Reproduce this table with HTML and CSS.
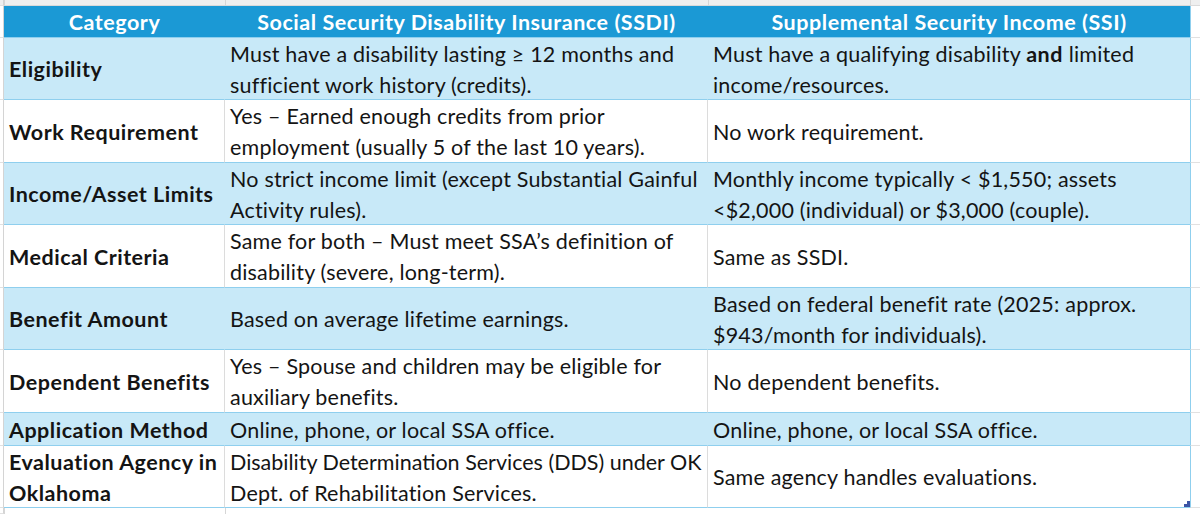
FILE: index.html
```html
<!DOCTYPE html>
<html lang="en">
<head>
<meta charset="utf-8">
<title>SSDI vs SSI</title>
<link rel="stylesheet" href="styles.css">
</head>
<body>
<div class="sheet">
  <div class="g top"></div><div class="top tl"></div><div class="top tl"></div><div class="top tl"></div><div class="top tl"></div>

  <div class="g"></div>
  <div class="hd">Category</div>
  <div class="hd">Social Security Disability Insurance (SSDI)</div>
  <div class="hd">Supplemental Security Income (SSI)</div>
  <div class="g r"></div>

  <div class="g"></div>
  <div class="c k fill"><span>Eligibility</span></div>
  <div class="c fill"><span>Must have a disability lasting ≥ 12 months and<br>sufficient work history (credits).</span></div>
  <div class="c fill last"><span>Must have a qualifying disability <b>and</b> limited<br>income/resources.</span></div>
  <div class="g r"></div>

  <div class="g"></div>
  <div class="c k"><span>Work Requirement</span></div>
  <div class="c"><span>Yes – Earned enough credits from prior<br>employment (usually 5 of the last 10 years).</span></div>
  <div class="c last"><span>No work requirement.</span></div>
  <div class="g r"></div>

  <div class="g"></div>
  <div class="c k fill"><span>Income/Asset Limits</span></div>
  <div class="c fill"><span>No strict income limit (except Substantial Gainful<br>Activity rules).</span></div>
  <div class="c fill last"><span>Monthly income typically &lt; $1,550; assets<br>&lt;$2,000 (individual) or $3,000 (couple).</span></div>
  <div class="g r"></div>

  <div class="g"></div>
  <div class="c k"><span>Medical Criteria</span></div>
  <div class="c"><span>Same for both – Must meet SSA’s definition of<br>disability (severe, long-term).</span></div>
  <div class="c last"><span>Same as SSDI.</span></div>
  <div class="g r"></div>

  <div class="g"></div>
  <div class="c k fill"><span>Benefit Amount</span></div>
  <div class="c fill"><span>Based on average lifetime earnings.</span></div>
  <div class="c fill last"><span>Based on federal benefit rate (2025: approx.<br>$943/month for individuals).</span></div>
  <div class="g r"></div>

  <div class="g"></div>
  <div class="c k"><span>Dependent Benefits</span></div>
  <div class="c"><span>Yes – Spouse and children may be eligible for<br>auxiliary benefits.</span></div>
  <div class="c last"><span>No dependent benefits.</span></div>
  <div class="g r"></div>

  <div class="g"></div>
  <div class="c k fill"><span>Application Method</span></div>
  <div class="c fill"><span>Online, phone, or local SSA office.</span></div>
  <div class="c fill last"><span>Online, phone, or local SSA office.</span></div>
  <div class="g r"></div>

  <div class="g"></div>
  <div class="c k"><span>Evaluation Agency in<br>Oklahoma</span></div>
  <div class="c"><span><span class="tight">Disability Determination Services (DDS) under OK</span><br>Dept. of Rehabilitation Services.</span></div>
  <div class="c last end"><span>Same agency handles evaluations.</span><span class="handle"></span></div>
  <div class="g r"></div>

  <div class="g bot"></div><div class="bot tl"></div><div class="bot tl"></div><div class="bot"></div><div class="bot"></div>
</div>
</body>
</html>
```

FILE: styles.css
```css
html, body {
  margin: 0;
  padding: 0;
  background: #ffffff;
}
body {
  width: 1200px;
  height: 514px;
  overflow: hidden;
  font-family: Lato, "Liberation Sans", sans-serif;
  color: #141414;
}
.sheet {
  display: grid;
  grid-template-columns: 4px 221px 483px 482px 1fr;
  grid-template-rows: 6px 32px 62px 63px 62px 63px 62px 63px 33px 62px 1fr;
  height: 514px;
}
.sheet > div {
  box-sizing: border-box;
  min-width: 0;
}
.top {
  background: #efefef;
  border-bottom: 1px solid #dadada;
}
.tl {
  border-left: 1px solid #d6d6d6;
}
.g {
  border-right: 1px solid #d4d4d4;
  border-bottom: 1px solid #e1e1e1;
}
.g.top {
  background: #efefef;
}
.g.r {
  border-right: none;
  border-left: 1px solid #8fcfee;
}
.bot {
  background: #ffffff;
}
.hd {
  background: #1b99d5;
  color: #ffffff;
  font-weight: 700;
  font-size: 21.5px;
  letter-spacing: 0.55px;
  line-height: 31px;
  padding-top: 1px;
  text-align: center;
  white-space: nowrap;
  border-bottom: 1px solid #8fcfee;
}
.c {
  display: flex;
  align-items: center;
  padding: 2px 5px 0;
  font-size: 21.5px;
  letter-spacing: 0.2px;
  line-height: 31px;
  white-space: nowrap;
  background: #ffffff;
  border-bottom: 1px solid #8fcfee;
  border-right: 1px solid #dcdcdc;
}
.c.fill {
  background: #c8e9f8;
  border-right-color: #c8e9f8;
}
.c.last {
  border-right: none;
}
.c.k {
  font-weight: 700;
  letter-spacing: 0.5px;
}
.c b {
  font-weight: 700;
  letter-spacing: 0.5px;
}
.tight {
  letter-spacing: 0;
}
.end {
  position: relative;
}
.handle {
  position: absolute;
  right: 0;
  bottom: 0;
  width: 6px;
  height: 6px;
  background: #3c55a5;
  clip-path: polygon(100% 0, 100% 100%, 0 100%, 0 50%, 50% 50%, 50% 0);
}
```
